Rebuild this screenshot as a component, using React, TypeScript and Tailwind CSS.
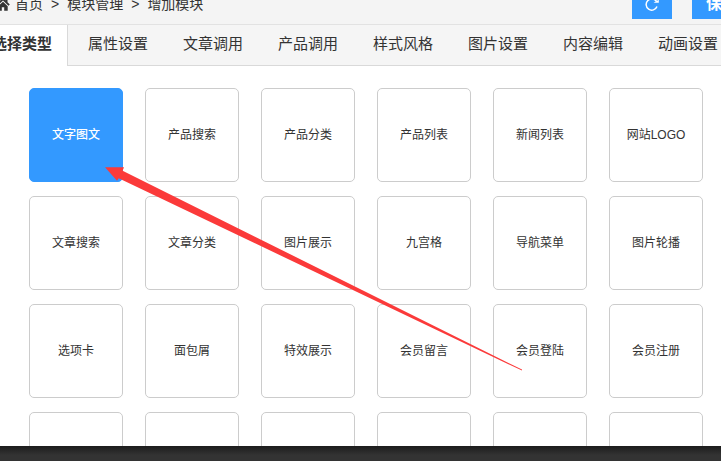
import React, { useState } from 'react';

const tabs = ['选择类型', '属性设置', '文章调用', '产品调用', '样式风格', '图片设置', '内容编辑', '动画设置'];

const modules = [
  '文字图文', '产品搜索', '产品分类', '产品列表', '新闻列表', '网站LOGO',
  '文章搜索', '文章分类', '图片展示', '九宫格', '导航菜单', '图片轮播',
  '选项卡', '面包屑', '特效展示', '会员留言', '会员登陆', '会员注册',
  '', '', '', '', '', '',
];

const Header: React.FC = () => (
  <header className="flex h-[25px] shrink-0 items-end justify-between overflow-hidden border-b border-[#e2e2e2] bg-[#f4f4f4]">
    <nav className="flex items-center gap-2 whitespace-nowrap pb-[10px] text-sm leading-5 text-[#333]">
      <a href="#home" className="-ml-1 flex items-center gap-[5px]">
        <svg className="h-[14px] w-[14px]" viewBox="0 0 14 14" fill="currentColor">
          <path d="M7 0.800L0.200 7.400l1.300 1.300L7 3.500l5.500 5.200 1.300-1.300-2.300-2.200V2H9.800v1.500z" />
          <path d="M7 4.800L2.300 9.200V13.800h3.500V10.200h2.400v3.600h3.500V9.200z" />
        </svg>
        首页
      </a>
      <span>&gt;</span>
      <a href="#modules">模块管理</a>
      <span>&gt;</span>
      <span>增加模块</span>
    </nav>
    <div className="-mr-[31px] flex gap-5 pb-[5px]">
      <button aria-label="刷新" className="flex h-[30px] w-10 items-center justify-center bg-[#3399ff] text-white">
        <svg className="h-4 w-4" viewBox="0 0 16 16" fill="none" stroke="currentColor" strokeWidth={1.5}>
          <path d="M13 10.500A5.600 5.600 0 1 1 12.600 5.700" />
          <path d="M9.500 6.800H14.800V3.800z" fill="currentColor" stroke="none" />
        </svg>
      </button>
      <button className="h-[30px] w-[60px] bg-[#3399ff] text-base font-bold leading-[30px] text-white">保存</button>
    </div>
  </header>
);

const App: React.FC = () => {
  const [activeTab, setActiveTab] = useState(tabs[0]);
  const [selected, setSelected] = useState(0);

  return (
    <div className="relative flex h-screen flex-col overflow-hidden bg-white font-['Liberation_Sans','Noto_Sans_CJK_SC',sans-serif] text-[#333]">
      <Header />

      {/* Tabs */}
      <div className="flex shrink-0 overflow-hidden bg-[#f5f5f5]">
        <div className="-ml-7 flex flex-1">
          {tabs.map((tab) => (
            <button
              key={tab}
              onClick={() => setActiveTab(tab)}
              className={`h-[41px] shrink-0 whitespace-nowrap pb-[3px] pl-5 pr-[15px] text-[15px] leading-5 ${
                tab === activeTab ? 'border-r border-[#d9d9d9] bg-white font-bold' : 'border-b border-[#d9d9d9]'
              }`}
            >
              {tab}
            </button>
          ))}
          <div className="flex-1 border-b border-[#d9d9d9]" />
        </div>
      </div>

      {/* Module types */}
      <main className="min-h-0 flex-1 overflow-hidden pl-[29px] pr-4 pt-[22px]">
        <div className="grid grid-cols-[repeat(auto-fill,94px)] gap-x-[22px] gap-y-[14px]">
          {modules.map((name, i) => (
            <button
              key={i}
              onClick={() => setSelected(i)}
              className={`h-[94px] rounded-[5px] border text-xs ${
                i === selected ? 'border-[#3399ff] bg-[#3399ff] font-medium text-white' : 'border-[#ccc] bg-white'
              }`}
            >
              {name}
            </button>
          ))}
        </div>
      </main>

      <footer className="h-[15px] shrink-0 bg-linear-to-b from-[#1c1c1c] to-[#333] to-60%" />

      <svg className="pointer-events-none absolute left-0 top-0 h-[461px] w-[721px]" viewBox="0 0 721 461">
        <path d="M105 167.300H124L122.600 170.800L522 369.600L522 370.600L118.700 178.300L117 180.800z" fill="#fb3a3a" />
      </svg>
    </div>
  );
};

export default App;
